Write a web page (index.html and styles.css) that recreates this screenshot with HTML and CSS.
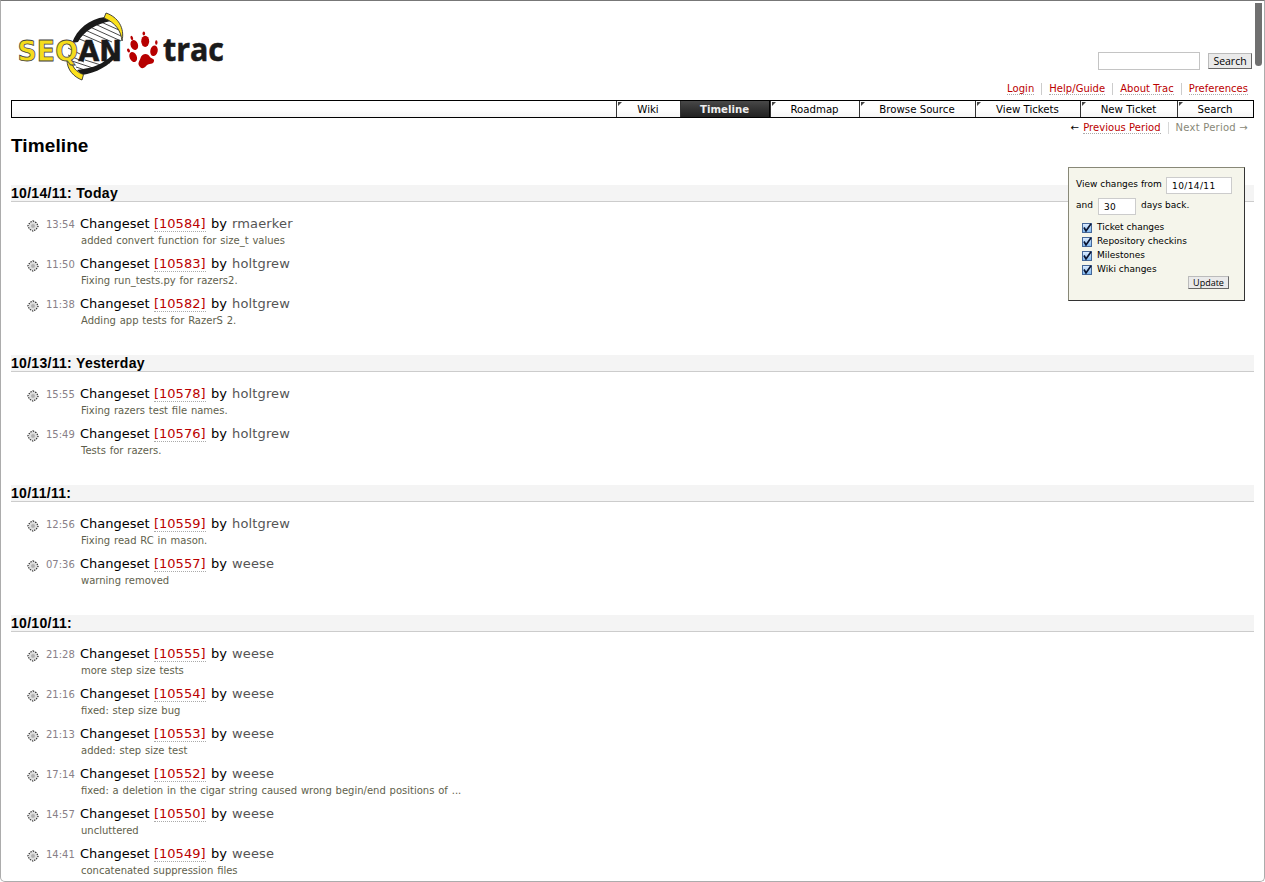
FILE: index.html
```html
<!DOCTYPE html>
<html lang="en">
<head>
<meta charset="utf-8">
<title>Timeline – SeqAn</title>
<link rel="stylesheet" href="styles.css">
</head>
<body>
<svg class="defs" width="0" height="0">
  <symbol id="gear" viewBox="0 0 12 12">
    <path d="M6 1 8.500 2.500 11 6 9.500 8.500 6 11 3 9.500 1 6 2.500 3.500Z" fill="#dedede"/>
    <path d="M6 .8 9.300 2.700 11.200 6 9.300 9.300 6 11.200 2.700 9.300 .8 6 2.700 2.700Z" fill="none" stroke="#222" stroke-width="1.100" stroke-dasharray="1.400 1.100"/>
    <rect x="5" y="5" width="2" height="2" fill="#fff" stroke="#777" stroke-width=".7"/>
  </symbol>
  <symbol id="check" viewBox="0 0 12 12">
    <path d="M3 5.500 5 9 10 1.800" fill="none" stroke="#0a1430" stroke-width="1.700"/>
  </symbol>
</svg>
<div class="window">
  <header class="banner">
    <svg class="logo" width="240" height="90" viewBox="0 0 240 90">
      <path d="M74 42C80 29 92 20 108 19L118 28 121 40C117 56 101 67 82 72L73 65Z" fill="#fff"/>
      <g stroke="#333" stroke-width=".9" fill="none">
        <path d="M101 22 119 30M95 24 121 36M90 27 121 41M85 30 112 42M81 34 104 44M77 38 94 45M68 48 80 54M68 55 84 62M85 60 104 66M72 61 96 69M76 67 88 71M104 61 110 63"/>
      </g>
      <path d="M72 43C77 29 89 19 105 17L111 21C96 24 84 31 78 42Z" fill="#1a1a1a"/>
      <path d="M77 70 83 69C98 67 108 60 114 53L119 54C109 66 96 73 82 75Z" fill="#1a1a1a"/>
      <path d="M106 13C118 17 125 28 122 41 121 31 116 23 104 18Z" fill="#fbe11c" stroke="#333" stroke-width=".9"/>
      <path d="M67 60C67 70 74 77 82 80L83.500 74.500C76 72 72 67 71.500 60Z" fill="#fbe11c" stroke="#333" stroke-width=".9"/>
      <text class="logo-seq" x="17.500" y="61" textLength="60.500" lengthAdjust="spacingAndGlyphs">SEQ</text>
      <text class="logo-an" x="78.200" y="61" textLength="44" lengthAdjust="spacingAndGlyphs">AN</text>
      <g fill="#b70000">
        <ellipse cx="134.300" cy="45" rx="3.700" ry="5" transform="rotate(-20 134.300 45)"/>
        <ellipse cx="145.200" cy="41.300" rx="4" ry="5.600"/>
        <ellipse cx="154" cy="50.800" rx="3.700" ry="5.300" transform="rotate(12 154 50.800)"/>
        <ellipse cx="133.200" cy="57" rx="3.600" ry="5.200" transform="rotate(-25 133.200 57)"/>
        <path d="M140 67C136.500 63 140 61 140.500 58 142 53 148 52.500 150 57 151 59 154.500 58 154 61 153.500 65 149 63 146.500 65.500 144 68.500 142 69 140 67Z"/>
        <ellipse cx="131.800" cy="38" rx="1.200" ry="2.200" transform="rotate(-20 131.800 38)"/>
        <ellipse cx="143.800" cy="33.500" rx="1.300" ry="2.100"/>
        <ellipse cx="156.300" cy="42.500" rx="1.200" ry="2.200"/>
        <ellipse cx="128.500" cy="50.500" rx="1.300" ry="2" transform="rotate(-30 128.500 50.500)"/>
      </g>
      <text class="logo-trac" x="163" y="61" textLength="61" lengthAdjust="spacingAndGlyphs">trac</text>
    </svg>
    <form class="search"><input type="text"><button type="button">Search</button></form>
  </header>
  <nav class="metanav">
    <span><a>Login</a></span><span><a>Help/Guide</a></span><span><a>About Trac</a></span><span><a>Preferences</a></span>
  </nav>
  <nav class="mainnav">
    <a class="w1">Wiki</a><a class="w2 active">Timeline</a><a class="w3">Roadmap</a><a class="w4">Browse Source</a><a class="w5">View Tickets</a><a class="w6">New Ticket</a><a class="w7">Search</a>
  </nav>
  <div class="ctxtnav"><span class="prev">← <a>Previous Period</a></span><span class="next">Next Period →</span></div>
  <main>
    <h1>Timeline</h1>
    <form class="prefs">
      <div class="line first"><label>View changes from</label><input class="date" value="10/14/11"></div>
      <div class="line second"><label>and</label><input class="days" value="30"><label>days back.</label></div>
      <div class="opts">
        <label><i><svg><use href="#check"/></svg></i>Ticket changes</label>
        <label><i><svg><use href="#check"/></svg></i>Repository checkins</label>
        <label><i><svg><use href="#check"/></svg></i>Milestones</label>
        <label><i><svg><use href="#check"/></svg></i>Wiki changes</label>
      </div>
      <button type="button">Update</button>
    </form>
    <div id="timeline"></div>
  </main>
  <div class="scrollbar"></div>
</div>
<script src="timeline.js"></script>
</body>
</html>
```
FILE: styles.css
```css
* { box-sizing: border-box; }
body { margin: 0; background: #fff; color: #000; font-family: Verdana, "DejaVu Sans", sans-serif; font-size: 13px; }
.defs { position: absolute; }
.window { position: relative; width: 1265px; height: 882px; overflow: hidden; border: 1px solid #acacac; border-top-color: #777; border-radius: 0 0 5px 5px; padding: 0 10px; }
.banner { height: 79px; display: flex; justify-content: space-between; align-items: flex-start; }
.logo { margin: -1px 0 0 -11px; flex: none; }
.logo-seq { font: bold 29px "DejaVu Sans", sans-serif; fill: #f5dc1c; stroke: #444; stroke-width: .8; }
.logo-an { font: bold 29px "DejaVu Sans", sans-serif; fill: #1a1a1a; stroke: #1a1a1a; stroke-width: .5; }
.logo-trac { font: bold 33px "Open Sans", sans-serif; fill: #1a1a1a; stroke: #1a1a1a; stroke-width: .6; }
.search { display: flex; align-items: center; gap: 8px; margin: 51px 2px 0 0; }
input { border: 1px solid #ccc; background: #fff; font: 10px Verdana, "DejaVu Sans", sans-serif; padding: 0 5px; outline: 0; color: #000; }
.search input { width: 102px; height: 18px; border-color: #c4c4c4; }
button { font-family: "Lucida Grande", "Open Sans", sans-serif; color: #000; background: #eaeaea; border: 1px solid #bbb; border-right-color: #666; border-bottom-color: #666; padding: 0; }
.search button { width: 44px; height: 16px; font-size: 10.5px; line-height: 14px; }
.metanav, .ctxtnav { display: flex; justify-content: flex-end; font-size: 10px; line-height: 12px; }
.metanav { height: 20px; padding: 3px 6px 0 0; }
.metanav span { height: 12px; padding-left: 7px; margin-left: 7px; border-left: 1px solid #ccc; letter-spacing: .04px; }
.metanav span:first-child { border: 0; }
a { color: #b00; }
.metanav a, .prev a, .rev { border-bottom: 1px dotted #aaa; }
.metanav a { display: block; height: 12px; }
.mainnav { display: flex; justify-content: flex-end; width: 1243px; height: 18px; border: 1px solid #000; background: linear-gradient(#fff, #fff 50%, #f5f5f5); font-size: 10.2px; line-height: 17px; }
.mainnav a { position: relative; color: #000; border-left: 1px solid #333; text-align: center; flex: none; padding-right: 1px; }
.mainnav a:not(.active)::before { content: ""; position: absolute; left: 1px; top: 1px; border-top: 4px solid #444; border-right: 4px solid transparent; }
.mainnav .active { color: #eee; font-weight: bold; background: linear-gradient(#484848, #333 50%, #222); border-right: 1px solid #000; }
.w1 { width: 64px; } .w2 { width: 90px; } .w3 { width: 89px; } .w4 { width: 116px; } .w5 { width: 105px; } .w6 { width: 97px; } .w7 { width: 76px; }
.ctxtnav { height: 20px; padding: 4px 6px 0 0; }
.ctxtnav span { white-space: nowrap; height: 12px; }
.prev a { display: inline-block; height: 12px; margin-left: 1px; letter-spacing: .05px; }
.next { color: #887; border-left: 1px solid #d7d7d7; margin-left: 7px; padding-left: 7px; letter-spacing: .25px; }
main { width: 1243px; position: relative; }
h1 { margin: -3px 0 0; font: bold 19px/22px "Liberation Sans", sans-serif; letter-spacing: .1px; height: 50px; }
h2 { margin: 0; height: 17px; font: bold 14px/17px "Liberation Sans", sans-serif; letter-spacing: .3px; background: #f4f4f4; border-bottom: 1px solid #ccc; }
.day { margin-bottom: 20px; }
.events { padding: 13px 0 0 17px; }
.event { height: 40px; }
.title { display: flex; height: 18px; line-height: 18px; align-items: center; white-space: nowrap; }
.title svg { width: 12px; height: 12px; margin: 3px 1px 0 -1px; }
.time { width: 34px; margin: 2px 0 0 6px; font-size: 10px; color: #887f88; }
.kind { width: 74px; }
.rev { color: #b00; width: 52px; height: 16px; line-height: 16px; }
.by { width: 21px; margin-left: 5px; }
.author { color: #555; letter-spacing: .15px; }
.desc { padding-left: 53px; font-size: 10px; line-height: 16px; color: #5f5f4c; white-space: nowrap; word-spacing: .65px; }
.prefs { position: absolute; z-index: 1; right: 9px; top: 32px; width: 177px; height: 134px; background: #f5f5eb; border: 1px solid #333; border-left-color: #887; border-top-color: #887; padding: 9px 7px; font-size: 9px; line-height: 14px; }
.line { display: flex; height: 17px; white-space: nowrap; }
.first { justify-content: space-between; padding-right: 5px; }
.prefs input { height: 17px; font-size: 9px; letter-spacing: .4px; }
.date { width: 66px; }
.second { margin-top: 4px; }
.second .days { width: 38px; margin: 0 5px; }
.opts { margin: 5px 0 0 6px; }
.opts label { display: flex; align-items: center; height: 14px; }
.opts i { width: 10px; height: 10px; border: 1px solid #456799; background: linear-gradient(#dcecff, #7fb8f0); margin: 1px 5px 0 0; position: relative; }
.opts svg { position: absolute; left: -2px; top: -2px; width: 12px; height: 12px; }
.prefs button { display: block; width: 41px; height: 13px; margin: 0 8px 0 auto; font-size: 9px; line-height: 11px; }
.scrollbar { position: absolute; right: 2px; top: 2px; width: 7px; height: 63px; border-radius: 0 0 4px 4px; background: #707070; }
```
FILE: timeline.js
```js
const days = [
  ["10/14/11: Today", [
    ["13:54", "10584", "rmaerker", "added convert function for size_t values"],
    ["11:50", "10583", "holtgrew", "Fixing run_tests.py for razers2."],
    ["11:38", "10582", "holtgrew", "Adding app tests for RazerS 2."]]],
  ["10/13/11: Yesterday", [
    ["15:55", "10578", "holtgrew", "Fixing razers test file names."],
    ["15:49", "10576", "holtgrew", "Tests for razers."]]],
  ["10/11/11:", [
    ["12:56", "10559", "holtgrew", "Fixing read RC in mason."],
    ["07:36", "10557", "weese", "warning removed"]]],
  ["10/10/11:", [
    ["21:28", "10555", "weese", "more step size tests"],
    ["21:16", "10554", "weese", "fixed: step size bug"],
    ["21:13", "10553", "weese", "added: step size test"],
    ["17:14", "10552", "weese", "fixed: a deletion in the cigar string caused wrong begin/end positions of ..."],
    ["14:57", "10550", "weese", "uncluttered"],
    ["14:41", "10549", "weese", "concatenated suppression files"]]]
];
document.getElementById("timeline").innerHTML = days.map(([date, events]) => `
  <section class="day"><h2>${date}</h2><div class="events">${events.map(([time, rev, author, desc]) => `
    <div class="event">
      <div class="title"><svg><use href="#gear"/></svg><span class="time">${time}</span><span class="kind">Changeset</span><a class="rev">[${rev}]</a><span class="by">by</span><span class="author">${author}</span></div>
      <div class="desc">${desc}</div>
    </div>`).join("")}</div></section>`).join("");
```
